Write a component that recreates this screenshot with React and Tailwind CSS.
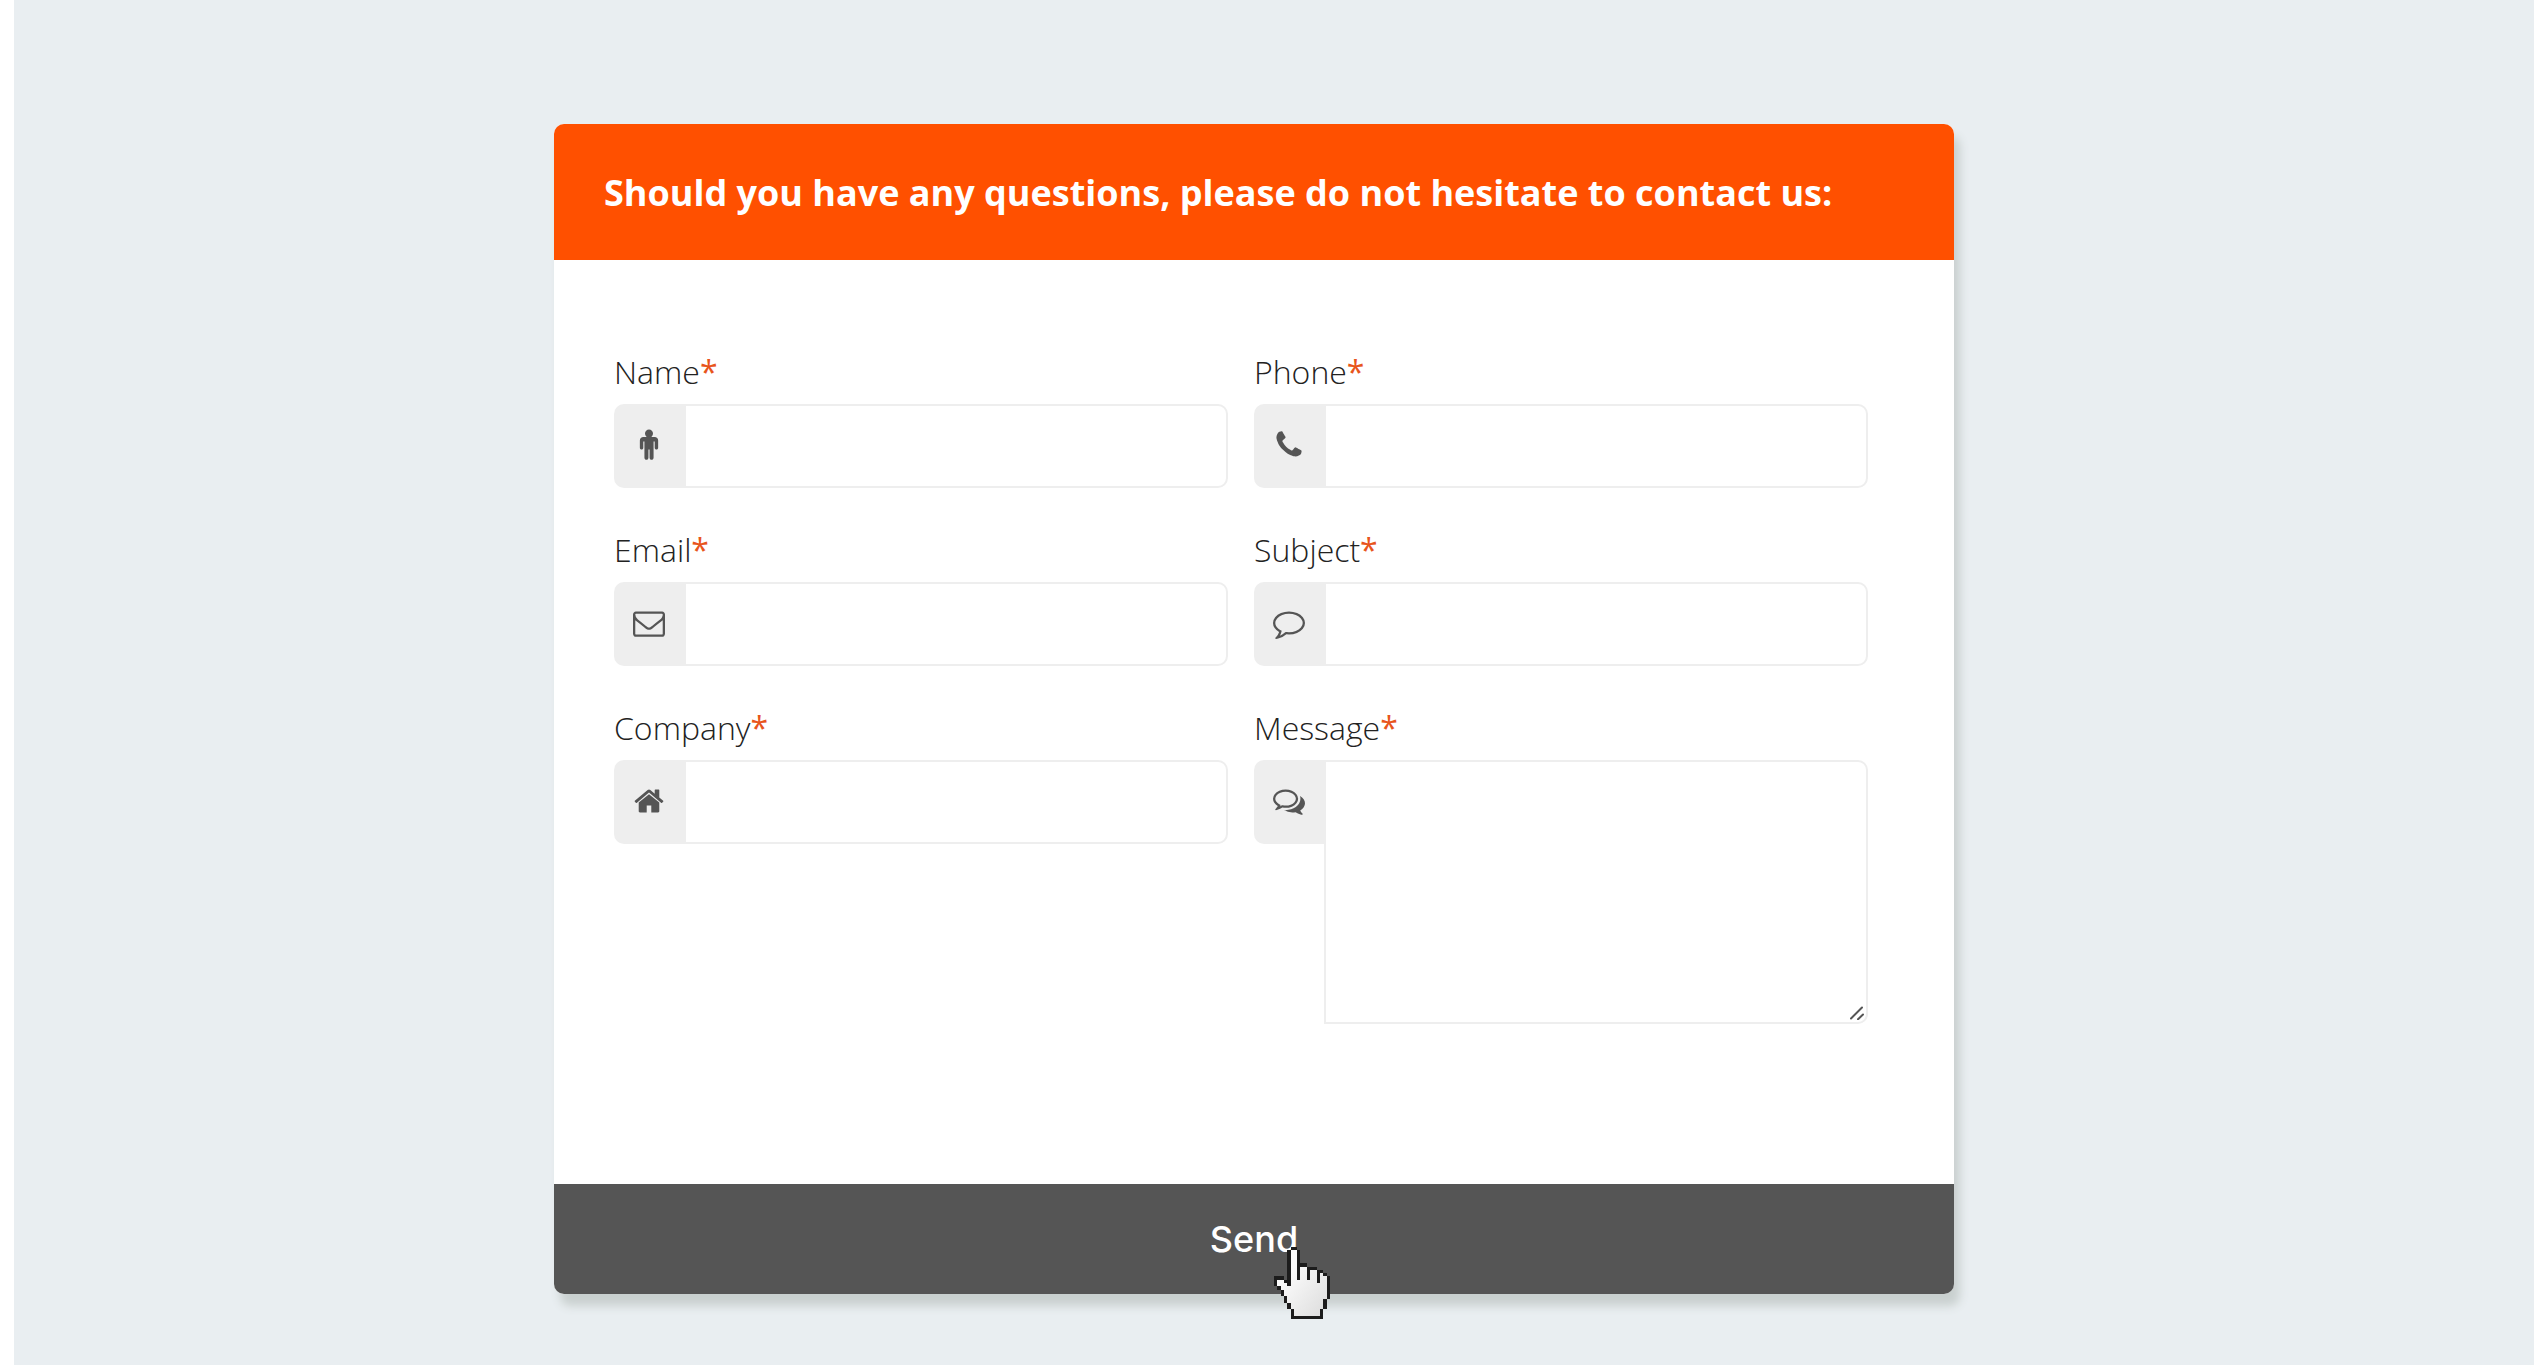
import React from "react";

const ICONS = {
  male: "M1408 640v416q0 40-28 68t-68 28-68-28-28-68v-352h-64v912q0 46-33 79t-79 33-79-33-33-79v-464h-64v464q0 46-33 79t-79 33-79-33-33-79v-912h-64v352q0 40-28 68t-68 28-68-28-28-68v-416q0-80 56-136t136-56h640q80 0 136 56t56 136zm-288-384q0 93-65.5 158.5t-158.5 65.5-158.5-65.5-65.5-158.5 65.5-158.5 158.5-65.5 158.5 65.5 65.5 158.5z",
  phone:
    "M1600 1240q0 27-10 70.5t-21 68.5q-21 50-122 106-94 51-186 51-27 0-53-3.5t-57.5-12.5-47-14.5-55.5-20.5-49-18q-98-35-175-83-127-79-264-216t-216-264q-48-77-83-175-3-9-18-49t-20.5-55.5-14.5-47-12.5-57.5-3.5-53q0-92 51-186 56-101 106-122 25-10 68.5-21t70.5-11q14 0 21 3 18 6 53 76 11 19 30 54t35 63.5 31 53.5q3 4 17.5 25t21.5 35.5 7 28.5q0 20-28.5 50t-62 55-62 53-28.5 46q0 9 5 22.5t8.5 20.5 14 24 11.5 19q76 137 174 235t235 174q2 1 19 11.5t24 14 20.5 8.5 22.5 5q18 0 46-28.5t53-62 55-62 50-28.5q14 0 28.5 7t35.5 21.5 25 17.5q25 15 53.5 31t63.5 35 54 30q70 35 76 53 3 7 3 21z",
  envelope:
    "M1664 1504v-768q-32 36-69 66-268 206-426 338-51 43-83 67t-86.5 48.5-102.5 24.5h-2q-48 0-102.5-24.5t-86.5-48.5-83-67q-158-132-426-338-37-30-69-66v768q0 13 9.5 22.5t22.5 9.5h1472q13 0 22.5-9.5t9.5-22.5zm0-1051v-24.5l-.5-13-3-12.5-5.5-9-9-7.5-14-2.5h-1472q-13 0-22.5 9.5t-9.5 22.5q0 168 147 284 193 152 401 317 6 5 35 29.5t46 37.5 44.5 31.5 50.5 27.5 43 9h2q20 0 43-9t50.5-27.5 44.5-31.5 46-37.5 35-29.5q208-165 401-317 54-43 100.5-115.5t46.5-131.5zm128-37v1088q0 66-47 113t-113 47h-1472q-66 0-113-47t-47-113v-1088q0-66 47-113t113-47h1472q66 0 113 47t47 113z",
  comment:
    "M896 384q-204 0-381.5 69.5t-282 187.5-104.5 255q0 112 71.5 213.5t201.5 175.5l87 50-27 96q-24 91-70 172 152-63 275-171l43-38 57 6q69 8 130 8 204 0 381.5-69.5t282-187.5 104.5-255-104.5-255-282-187.5-381.5-69.5zm896 512q0 174-120 321.5t-326 233-450 85.5q-70 0-145-8-198 175-460 242-49 14-114 22h-5q-15 0-27-10.5t-16-27.5v-1q-3-4-.5-12t2-10 4.5-9.5l6-9 7-8.5 8-9q7-8 31-34.5t34.5-38 31-39.5 32.5-51 27-59 26-76q-157-89-247.5-220t-90.5-281q0-174 120-321.5t326-233 450-85.5 450 85.5 326 233 120 321.5z",
  home: "M1472 992v480q0 26-19 45t-45 19h-384v-384h-256v384h-384q-26 0-45-19t-19-45v-480q0-1 .5-3t.5-3l575-474 575 474q1 2 1 6zm223-69l-62 74q-8 9-21 11h-3q-13 0-21-7l-692-577-692 577q-12 8-24 7-13-2-21-11l-62-74q-8-10-7-23.5t11-21.5l719-599q32-26 76-26t76 26l244 204v-195q0-14 9-23t23-9h192q14 0 23 9t9 23v408l219 182q10 8 11 21.5t-7 23.5z",
  comments:
    "M704 384q-153 0-286 52t-211.5 141-78.5 191q0 82 53 158t149 132l97 56-35 84q34-20 62-39l44-31 53 10q78 14 153 14 153 0 286-52t211.5-141 78.5-191-78.5-191-211.5-141-286-52zm0-128q191 0 353.5 68.5t256.5 186.5 94 257-94 257-256.5 186.5-353.5 68.5q-86 0-176-16-124 88-278 128-36 9-86 16h-3q-11 0-20.5-8t-11.5-21q-1-3-1-6.5t.5-6.5 2-6l2.5-5 3.5-5.5 4-5 4.5-5 4-4.5q5-6 23-25t26-29.5 22.5-29 25-38.5 20.5-44q-124-72-195-177t-71-224q0-139 94-257t256.5-186.5 353.5-68.5zm822 1169q10 24 20.5 44t25 38.5 22.5 29 26 29.5 23 25q1 1 4 4.5t4.5 5 4 5 3.5 5.5l2.5 5 2 6 .5 6.5-1 6.5q-3 14-13 22t-22 7q-50-7-86-16-154-40-278-128-90 16-176 16-271 0-472-132 58 4 88 4 161 0 309-45t264-129q125-92 192-212t67-254q0-77-23-152 129 71 204 178t75 230q0 120-71 224.5t-195 176.5z",
};

function Icon({ name }) {
  return (
    <svg viewBox="0 0 1792 1792" className="size-8 fill-[#555]" aria-hidden="true">
      <path d={ICONS[name]} />
    </svg>
  );
}

function Field({ id, label, icon, type = "text", multiline = false }) {
  return (
    <div>
      <label
        htmlFor={id}
        className="mb-2.5 block text-[32px] leading-[44px] font-light text-[#222]"
      >
        {label}
        <span className="font-normal text-[#e8551c]">*</span>
      </label>
      <div className="flex items-start">
        <span className="flex h-[84px] w-[70px] shrink-0 items-center justify-center rounded-l-[10px] bg-[#eee] pb-0.5">
          <Icon name={icon} />
        </span>
        {multiline ? (
          <div className="relative flex min-w-0 grow">
            <textarea
              id={id}
              name={id}
              className="h-[264px] w-full resize-none rounded-r-[10px] border-2 border-[#eee] bg-white px-4 py-3 text-[28px] outline-none"
            />
            <svg
              viewBox="0 0 14 14"
              className="pointer-events-none absolute right-1 bottom-1 size-3.5 stroke-[#555]"
              strokeWidth="2"
              strokeLinecap="round"
              aria-hidden="true"
            >
              <path d="M1 12.5L12 1.5M8 13.300L13 8.500" />
            </svg>
          </div>
        ) : (
          <input
            id={id}
            name={id}
            type={type}
            className="h-[84px] min-w-0 grow rounded-r-[10px] border-2 border-[#eee] bg-white px-4 text-[28px] outline-none"
          />
        )}
      </div>
    </div>
  );
}

function HandCursor() {
  return (
    <svg
      viewBox="0 0 17 22"
      className="pointer-events-none absolute top-[63px] left-1/2 ml-5 h-[72px] w-14"
      shapeRendering="crispEdges"
      aria-hidden="true"
    >
      <defs>
        <linearGradient id="hand" x1="0" y1="0" x2="1" y2="1">
          <stop offset="0.3" stopColor="#fafafa" />
          <stop offset="1" stopColor="#dcdcdc" />
        </linearGradient>
      </defs>
      <path
        fill="#1c1c1c"
        d="M5 0H7V1H8V5H10V6H13V7H15V8H16V9H17V16H16V19H15V22H5V19H4V17H3V15H2V13H1V12H0V9H3V10H4V1H5Z"
      />
      <path
        fill="url(#hand)"
        d="M5 1H7V10H8V6H10V10H11V7H13V11H14V8H15V9H16V16H15V19H14V21H6V19H5V17H4V15H3V13H2V12H1V10H3V11H4V12H5Z"
      />
    </svg>
  );
}

export default function App() {
  return (
    <div className="bg-white px-3.5 font-['Open_Sans',sans-serif]">
      <main className="min-h-screen bg-[#e9eef1] pt-[124px] pr-10">
        <form
          className="mx-auto max-w-[1400px] rounded-[10px] bg-white shadow-[6px_12px_10px_#c9d0cf]"
          onSubmit={(e) => e.preventDefault()}
        >
          <h1 className="rounded-t-[10px] bg-[#ff5000] px-[50px] pt-[45px] pb-[43px] text-[36px] leading-[48px] font-bold text-white">
            Should you have any questions, please do not hesitate to contact us:
          </h1>
          <div className="grid grid-cols-2 gap-x-[26px] gap-y-10 pt-[90px] pr-[86px] pb-40 pl-[60px]">
            <Field id="name" label="Name" icon="male" />
            <Field id="phone" label="Phone" icon="phone" type="tel" />
            <Field id="email" label="Email" icon="envelope" type="email" />
            <Field id="subject" label="Subject" icon="comment" />
            <Field id="company" label="Company" icon="home" />
            <Field id="message" label="Message" icon="comments" multiline />
          </div>
          <button
            type="submit"
            className="relative block h-[110px] w-full cursor-pointer rounded-b-[10px] bg-[#555] font-['Inter',sans-serif] text-[36px] leading-[48px] font-medium text-white"
          >
            Send
            <HandCursor />
          </button>
        </form>
      </main>
    </div>
  );
}
